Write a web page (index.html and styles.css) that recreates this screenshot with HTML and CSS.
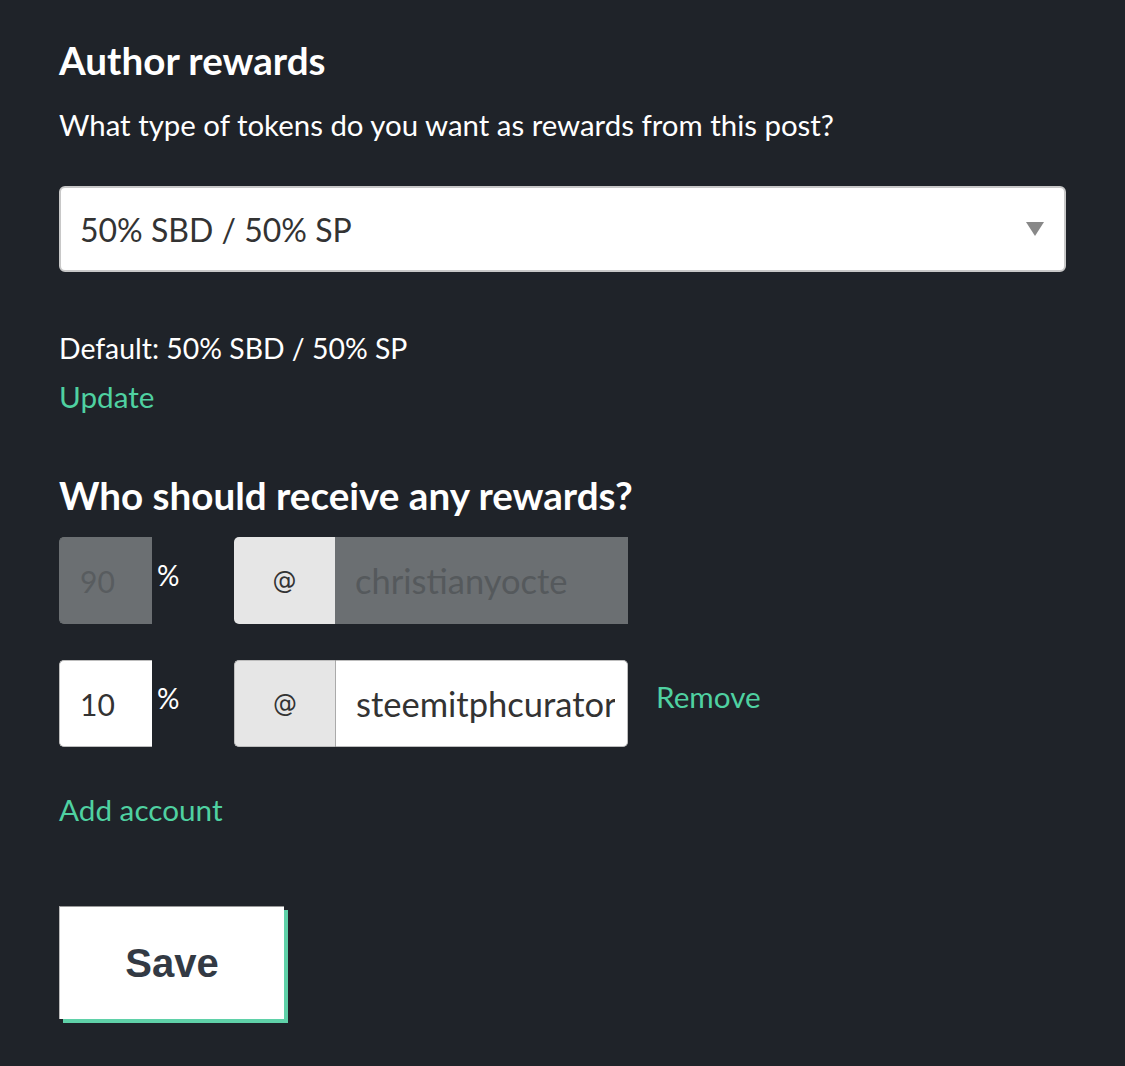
FILE: index.html
```html
<!DOCTYPE html>
<html>
<head>
<meta charset="utf-8">
<link rel="stylesheet" href="styles.css">
</head>
<body>
<div class="page">
  <h2 class="title">Author rewards</h2>
  <p class="lead">What type of tokens do you want as rewards from this post?</p>
  <div class="select">
    <span class="select-text">50% SBD / 50% SP</span>
    <span class="caret"></span>
  </div>
  <p class="default">Default: 50% SBD / 50% SP</p>
  <a class="link update">Update</a>

  <h2 class="title title2">Who should receive any rewards?</h2>
  <div class="row">
    <div class="pct disabled">90</div>
    <span class="pct-sign">%</span>
    <div class="acct">
      <div class="at">@</div>
      <div class="name disabled">christianyocte</div>
    </div>
  </div>
  <div class="row">
    <div class="pct">10</div>
    <span class="pct-sign">%</span>
    <div class="acct">
      <div class="at at-border">@</div>
      <div class="name"><span class="name-clip">steemitphcurator</span></div>
    </div>
    <a class="link remove">Remove</a>
  </div>
  <a class="link add">Add account</a>
  <div class="save-wrap">
    <button class="save">Save</button>
  </div>
</div>
</body>
</html>
```

FILE: styles.css
```css
html, body {
  margin: 0;
  padding: 0;
  background: #1f2329;
}
body {
  font-family: Lato, "Open Sans", sans-serif;
  color: #fff;
}
.page {
  padding: 37px 59px 0 59px;
}
.title {
  margin: 0;
  font-size: 38.6px;
  font-weight: 700;
  line-height: 46px;
}
.lead {
  margin: 22px 0 0;
  font-size: 29.4px;
  line-height: 40px;
}
.select {
  margin-top: 41px;
  height: 86px;
  box-sizing: border-box;
  background: #fff;
  border: 2px solid #c8c8c8;
  border-radius: 6px;
  display: flex;
  align-items: center;
  justify-content: space-between;
  padding: 0 20px 0 19px;
}
.select-text {
  color: #333;
  font-size: 32px;
}
.caret {
  width: 0;
  height: 0;
  border-left: 9px solid transparent;
  border-right: 9px solid transparent;
  border-top: 14px solid #888;
}
.default {
  margin: 57px 0 0;
  font-size: 28.4px;
  line-height: 38px;
}
.link {
  display: block;
  color: #4fd1a1;
  font-size: 29.7px;
  line-height: 38px;
  cursor: pointer;
}
.update {
  margin-top: 11px;
}
.title2 {
  margin-top: 56px;
}
.row {
  display: flex;
  align-items: flex-start;
  margin-top: 19px;
}
.row + .row {
  margin-top: 36px;
}
.pct {
  width: 93px;
  height: 87px;
  box-sizing: border-box;
  background: #fff;
  border: 1px solid #bdbdbd;
  border-right: none;
  border-radius: 5px 0 0 5px;
  color: #333;
  font-size: 30px;
  display: flex;
  align-items: center;
  padding-left: 20px;
}
.pct.disabled {
  background: #6b6f72;
  border-color: #6b6f72;
  color: #585c5f;
}
.pct-sign {
  width: 82px;
  padding-left: 5px;
  box-sizing: border-box;
  font-size: 28px;
  line-height: 28px;
  margin-top: 24px;
}
.acct {
  display: flex;
  width: 394px;
  height: 87px;
}
.at {
  width: 101px;
  box-sizing: border-box;
  background: #e6e6e6;
  border-radius: 5px 0 0 5px;
  display: flex;
  align-items: center;
  justify-content: center;
  color: #333;
  font-family: "DejaVu Sans", sans-serif;
  font-size: 24px;
}
.at-border {
  border: 1px solid #bdbdbd;
  border-right: 1px solid #aaa;
  width: 102px;
}
.name {
  flex: 1;
  min-width: 0;
  box-sizing: border-box;
  background: #fff;
  border: 1px solid #bdbdbd;
  border-left: none;
  border-radius: 0 5px 5px 0;
  color: #333;
  font-size: 34.5px;
  display: flex;
  align-items: center;
  padding: 0 8px 0 20px;
}
.name-clip {
  display: block;
  max-width: 259px;
  overflow: hidden;
  white-space: nowrap;
}
.name.disabled {
  background: #6b6f72;
  border-color: #6b6f72;
  border-radius: 0;
  color: #55595c;
}
.remove {
  margin-left: 28px;
  margin-top: 18px;
}
.add {
  margin-top: 44px;
}
.save-wrap {
  margin-top: 77px;
  padding-bottom: 40px;
}
.save {
  display: block;
  width: 225px;
  height: 113px;
  background: #fff;
  border: none;
  border-top: 1px solid #999;
  border-left: 1px solid #bbb;
  box-shadow: 4px 4px 0 #5fd1a8;
  font-family: "Liberation Sans", Arial, sans-serif;
  font-weight: 700;
  font-size: 40px;
  color: #333a44;
  padding: 0;
}
```
